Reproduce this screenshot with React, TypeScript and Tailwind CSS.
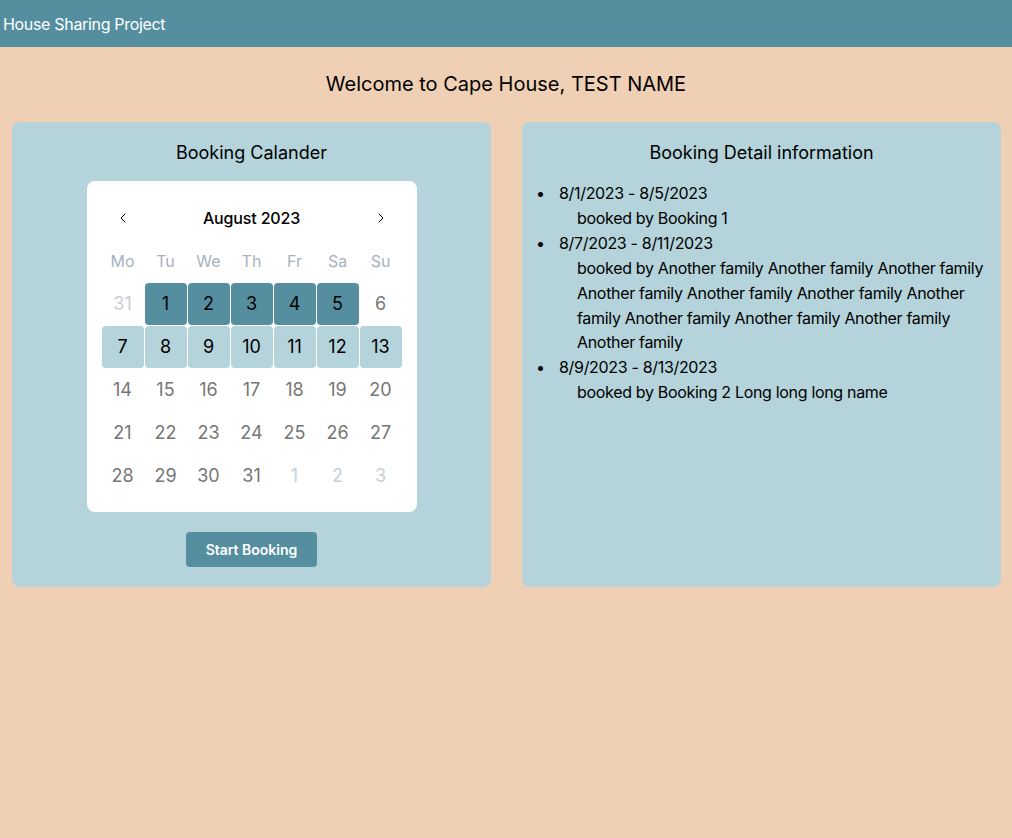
import { ChevronLeft, ChevronRight } from "lucide-react";

type Day = { n: number; muted?: boolean; kind?: "dark" | "light" };

const weekNames = ["Mo", "Tu", "We", "Th", "Fr", "Sa", "Su"];

const days: Day[] = [
  { n: 31, muted: true },
  ...[1, 2, 3, 4, 5].map((n) => ({ n, kind: "dark" as const })),
  { n: 6 },
  ...[7, 8, 9, 10, 11, 12, 13].map((n) => ({ n, kind: "light" as const })),
  ...Array.from({ length: 18 }, (_, i) => ({ n: 14 + i })),
  { n: 1, muted: true },
  { n: 2, muted: true },
  { n: 3, muted: true },
];

const bookings = [
  { range: "8/1/2023 - 8/5/2023", by: "booked by Booking 1" },
  {
    range: "8/7/2023 - 8/11/2023",
    by: "booked by Another family Another family Another family Another family Another family Another family Another family Another family Another family Another family Another family",
  },
  { range: "8/9/2023 - 8/13/2023", by: "booked by Booking 2 Long long long name" },
];

function Calendar() {
  return (
    <div className="w-[330px] rounded-lg bg-white p-[15px]">
      <div className="flex h-[44px] items-center justify-between px-[13px]">
        <ChevronLeft className="h-4 w-4 text-black" strokeWidth={1.5} />
        <span className="text-base font-medium tracking-[-0.01em] text-black">August 2023</span>
        <ChevronRight className="h-4 w-4 text-black" strokeWidth={1.5} />
      </div>
      <div className="grid grid-cols-7 gap-px">
        {weekNames.map((w) => (
          <div key={w} className="flex h-[42px] items-center justify-center text-base text-[#a8b2c0]">
            {w}
          </div>
        ))}
        {days.map((d, i) => {
          let cls = "text-[#767676]";
          if (d.muted) cls = "text-[#c8ced6]";
          if (d.kind === "dark") cls = "bg-[#558f9f] text-black rounded";
          if (d.kind === "light") cls = "bg-[#b4d3da] text-black rounded";
          return (
            <div key={i} className={`flex h-[42px] items-center justify-center text-lg ${cls}`}>
              {d.n}
            </div>
          );
        })}
      </div>
    </div>
  );
}

export default function App() {
  return (
    <div className="min-h-[838px] bg-[#f0d0b4] font-['Inter',sans-serif] text-black">
      <header className="flex h-[47px] items-center bg-[#558f9f] px-[3px] text-base tracking-[-0.02em] text-white">
        House Sharing Project
      </header>

      <h1 className="mt-[23px] text-center text-xl leading-7">Welcome to Cape House, TEST NAME</h1>

      <div className="mt-[24px] grid grid-cols-2 gap-[31px] pl-[12px] pr-[11px]">
        <section className="flex flex-col items-center rounded-lg bg-[#b4d3da] pb-5 pt-[17px]">
          <h2 className="text-lg leading-7">Booking Calander</h2>
          <div className="mt-[14px]">
            <Calendar />
          </div>
          <button className="mt-[20px] h-[35px] w-[131px] rounded bg-[#558f9f] text-sm font-semibold text-white">
            Start Booking
          </button>
        </section>

        <section className="rounded-lg bg-[#b4d3da] pb-5 pt-[17px]">
          <h2 className="text-center text-lg leading-7">Booking Detail information</h2>
          <ul className="mt-[14px] pl-[14px] pr-3 text-base leading-[24.9px] tracking-[-0.02em]">
            {bookings.map((b) => (
              <li key={b.range} className="flex">
                <span className="w-[23px] shrink-0">•</span>
                <div>
                  <div>{b.range}</div>
                  <div className="pl-[18px]">{b.by}</div>
                </div>
              </li>
            ))}
          </ul>
        </section>
      </div>
    </div>
  );
}
